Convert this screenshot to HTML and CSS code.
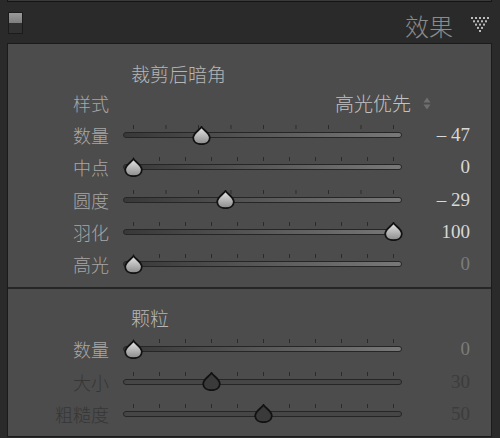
FILE: index.html
```html
<!DOCTYPE html>
<html>
<head>
  <meta charset="utf-8">
  <title>效果</title>
  <link rel="stylesheet" href="styles.css">
</head>
<body>
  <div class="top-edge"></div>
  <div class="panel-header">
    <span class="toggle"></span>
    <h2>效果</h2>
    <svg class="collapse" width="19" height="15" viewBox="0 0 19 15">
      <g fill="#bcbcbc">
        <rect x="0" y="0" width="2" height="2"/><rect x="4" y="0" width="2" height="2"/><rect x="8" y="0" width="2" height="2"/><rect x="12" y="0" width="2" height="2"/><rect x="16" y="0" width="2" height="2"/>
        <rect x="2" y="3.3" width="2" height="2"/><rect x="6" y="3.3" width="2" height="2"/><rect x="10" y="3.3" width="2" height="2"/><rect x="14" y="3.3" width="2" height="2"/>
        <rect x="4" y="6.6" width="2" height="2"/><rect x="8" y="6.6" width="2" height="2"/><rect x="12" y="6.6" width="2" height="2"/>
        <rect x="6" y="9.9" width="2" height="2"/><rect x="10" y="9.9" width="2" height="2"/>
        <rect x="8" y="13" width="2" height="2"/>
      </g>
    </svg>
  </div>

  <div class="panel">
    <!-- Post-crop vignetting -->
    <div class="section">
      <h3>裁剪后暗角</h3>
      <div class="row row-style">
        <span class="label">样式</span>
        <span class="popup">高光优先
          <svg width="10" height="15" viewBox="0 0 10 15">
            <path d="M1.5 6.5 L5 1.5 L8.5 6.5 Z M1.5 8.5 L5 13.5 L8.5 8.5 Z" fill="#6f6f6f"/>
          </svg>
        </span>
      </div>
      <div class="row">
        <span class="label">数量</span>
        <div class="slider">
          <div class="ticks wide"></div>
          <div class="track"></div>
          <svg class="thumb" viewBox="0 0 19 19" style="left: 78.9px">
            <defs>
              <linearGradient id="knob" x1="0" y1="0" x2="0" y2="1">
                <stop offset="0" stop-color="#e8e8e8"/>
                <stop offset="1" stop-color="#8a8a8a"/>
              </linearGradient>
            </defs>
            <path d="M9.5 0.9 C11 3.8 17.8 7 17.8 11.8 C17.8 16 14 18.2 9.5 18.2 C5 18.2 1.2 16 1.2 11.8 C1.2 7 8 3.8 9.5 0.9 Z"/>
          </svg>
        </div>
        <span class="value">– 47</span>
      </div>
      <div class="row">
        <span class="label">中点</span>
        <div class="slider">
          <div class="ticks"></div>
          <div class="track"></div>
          <svg class="thumb" viewBox="0 0 19 19" style="left: 10px">
            <path d="M9.5 0.9 C11 3.8 17.8 7 17.8 11.8 C17.8 16 14 18.2 9.5 18.2 C5 18.2 1.2 16 1.2 11.8 C1.2 7 8 3.8 9.5 0.9 Z"/>
          </svg>
        </div>
        <span class="value">0</span>
      </div>
      <div class="row">
        <span class="label">圆度</span>
        <div class="slider">
          <div class="ticks wide"></div>
          <div class="track"></div>
          <svg class="thumb" viewBox="0 0 19 19" style="left: 102.3px">
            <path d="M9.5 0.9 C11 3.8 17.8 7 17.8 11.8 C17.8 16 14 18.2 9.5 18.2 C5 18.2 1.2 16 1.2 11.8 C1.2 7 8 3.8 9.5 0.9 Z"/>
          </svg>
        </div>
        <span class="value">– 29</span>
      </div>
      <div class="row">
        <span class="label">羽化</span>
        <div class="slider">
          <div class="ticks"></div>
          <div class="track"></div>
          <svg class="thumb" viewBox="0 0 19 19" style="left: 270px">
            <path d="M9.5 0.9 C11 3.8 17.8 7 17.8 11.8 C17.8 16 14 18.2 9.5 18.2 C5 18.2 1.2 16 1.2 11.8 C1.2 7 8 3.8 9.5 0.9 Z"/>
          </svg>
        </div>
        <span class="value">100</span>
      </div>
      <div class="row">
        <span class="label">高光</span>
        <div class="slider">
          <div class="ticks"></div>
          <div class="track"></div>
          <svg class="thumb" viewBox="0 0 19 19" style="left: 10px">
            <path d="M9.5 0.9 C11 3.8 17.8 7 17.8 11.8 C17.8 16 14 18.2 9.5 18.2 C5 18.2 1.2 16 1.2 11.8 C1.2 7 8 3.8 9.5 0.9 Z"/>
          </svg>
        </div>
        <span class="value dim">0</span>
      </div>
    </div>

    <!-- Grain -->
    <div class="section">
      <h3>颗粒</h3>
      <div class="row">
        <span class="label">数量</span>
        <div class="slider">
          <div class="ticks"></div>
          <div class="track"></div>
          <svg class="thumb" viewBox="0 0 19 19" style="left: 10px">
            <path d="M9.5 0.9 C11 3.8 17.8 7 17.8 11.8 C17.8 16 14 18.2 9.5 18.2 C5 18.2 1.2 16 1.2 11.8 C1.2 7 8 3.8 9.5 0.9 Z"/>
          </svg>
        </div>
        <span class="value dim">0</span>
      </div>
      <div class="row off">
        <span class="label">大小</span>
        <div class="slider">
          <div class="ticks"></div>
          <div class="track"></div>
          <svg class="thumb" viewBox="0 0 19 19" style="left: 88px">
            <path d="M9.5 0.9 C11 3.8 17.8 7 17.8 11.8 C17.8 16 14 18.2 9.5 18.2 C5 18.2 1.2 16 1.2 11.8 C1.2 7 8 3.8 9.5 0.9 Z"/>
          </svg>
        </div>
        <span class="value">30</span>
      </div>
      <div class="row off">
        <span class="label">粗糙度</span>
        <div class="slider">
          <div class="ticks"></div>
          <div class="track"></div>
          <svg class="thumb" viewBox="0 0 19 19" style="left: 140px">
            <path d="M9.5 0.9 C11 3.8 17.8 7 17.8 11.8 C17.8 16 14 18.2 9.5 18.2 C5 18.2 1.2 16 1.2 11.8 C1.2 7 8 3.8 9.5 0.9 Z"/>
          </svg>
        </div>
        <span class="value">50</span>
      </div>
    </div>
  </div>
</body>
</html>
```

FILE: styles.css
```css
body {
  margin: 0;
  background-color: #2a2a2a;
  font-family: "Noto Sans CJK SC", "Noto Sans", sans-serif;
  font-weight: 300;
}
.top-edge {
  height: 1px;
  margin: 0 8px 0 7px;
  background-color: #3a3a3a;
  border: 1px solid #151515;
  border-top: none;
}
.panel-header {
  display: flex;
  align-items: flex-start;
  height: 41px;
  padding: 0 10px 0 8px;
}
.toggle {
  width: 15px;
  height: 22px;
  box-sizing: border-box;
  margin-top: 10px;
  border: 1px solid #1b1b1b;
  background: linear-gradient(#9a9a9a, #7e7e7e) top / 100% 50% no-repeat, #313131;
}
.panel-header h2 {
  margin: 9px 0 0 auto;
  font-size: 24px;
  line-height: 30px;
  font-weight: 300;
  color: #8b8b8b;
}
.collapse {
  margin: 15px 0 0 18px;
}
.panel {
  margin: 0 8px 0 7px;
  border: 1px solid #1b1b1b;
  background-color: #4c4c4c;
}
.section {
  padding: 18px 0 6.5px;
}
.section + .section {
  border-top: 2px solid #262626;
  padding: 17.5px 0 5.75px;
}
.section h3 {
  margin: 0 0 1px 123px;
  font-size: 19px;
  line-height: 24px;
  font-weight: 300;
  color: #b6b6b6;
}
.section + .section h3 {
  margin-bottom: 2.85px;
}
.row {
  display: grid;
  grid-template-columns: 101px 279px 54px;
  column-gap: 14px;
  align-items: center;
  height: 32.3px;
}
.row-style {
  height: 32px;
}
.label {
  text-align: right;
  font-size: 18px;
  line-height: 24px;
  color: #a7a7a7;
  white-space: nowrap;
}
.popup {
  grid-column: 2 / 4;
  justify-self: end;
  margin-right: 38px;
  display: flex;
  align-items: center;
  gap: 11px;
  font-size: 19px;
  line-height: 24px;
  color: #c3c3c3;
}
.value {
  text-align: right;
  font-family: "Liberation Serif", serif;
  font-weight: normal;
  font-size: 19px;
  line-height: 24px;
  color: #d8d8d8;
  white-space: nowrap;
}
.value.dim {
  color: #7c7c7c;
}

/* slider: tick strip, groove, knob */
.slider {
  position: relative;
  align-self: start;
  padding-top: 6px;
}
.ticks {
  height: 4px;
  margin: 0 8px 3px 10px;
  background: linear-gradient(to right, #2b2b2b 1px, transparent 1px) 0 0 / 26px 4px repeat-x;
}
.ticks.wide {
  background-size: 32.5px 4px;
}
.track {
  height: 6px;
  box-sizing: border-box;
  border: 1px solid #262626;
  border-radius: 3px;
  background: linear-gradient(to right, #383838, #787878);
}
.thumb {
  position: absolute;
  top: 6.5px;
  width: 19px;
  height: 19px;
  margin-left: -9.5px;
}
.thumb path {
  fill: url(#knob);
  stroke: #121212;
  stroke-width: 1.8;
}
.off .thumb path {
  fill: #3a3a3a;
}
.off .track {
  background: #464646;
}
.off .label {
  color: #363636;
}
.off .value {
  color: #3c3c3c;
}
```
